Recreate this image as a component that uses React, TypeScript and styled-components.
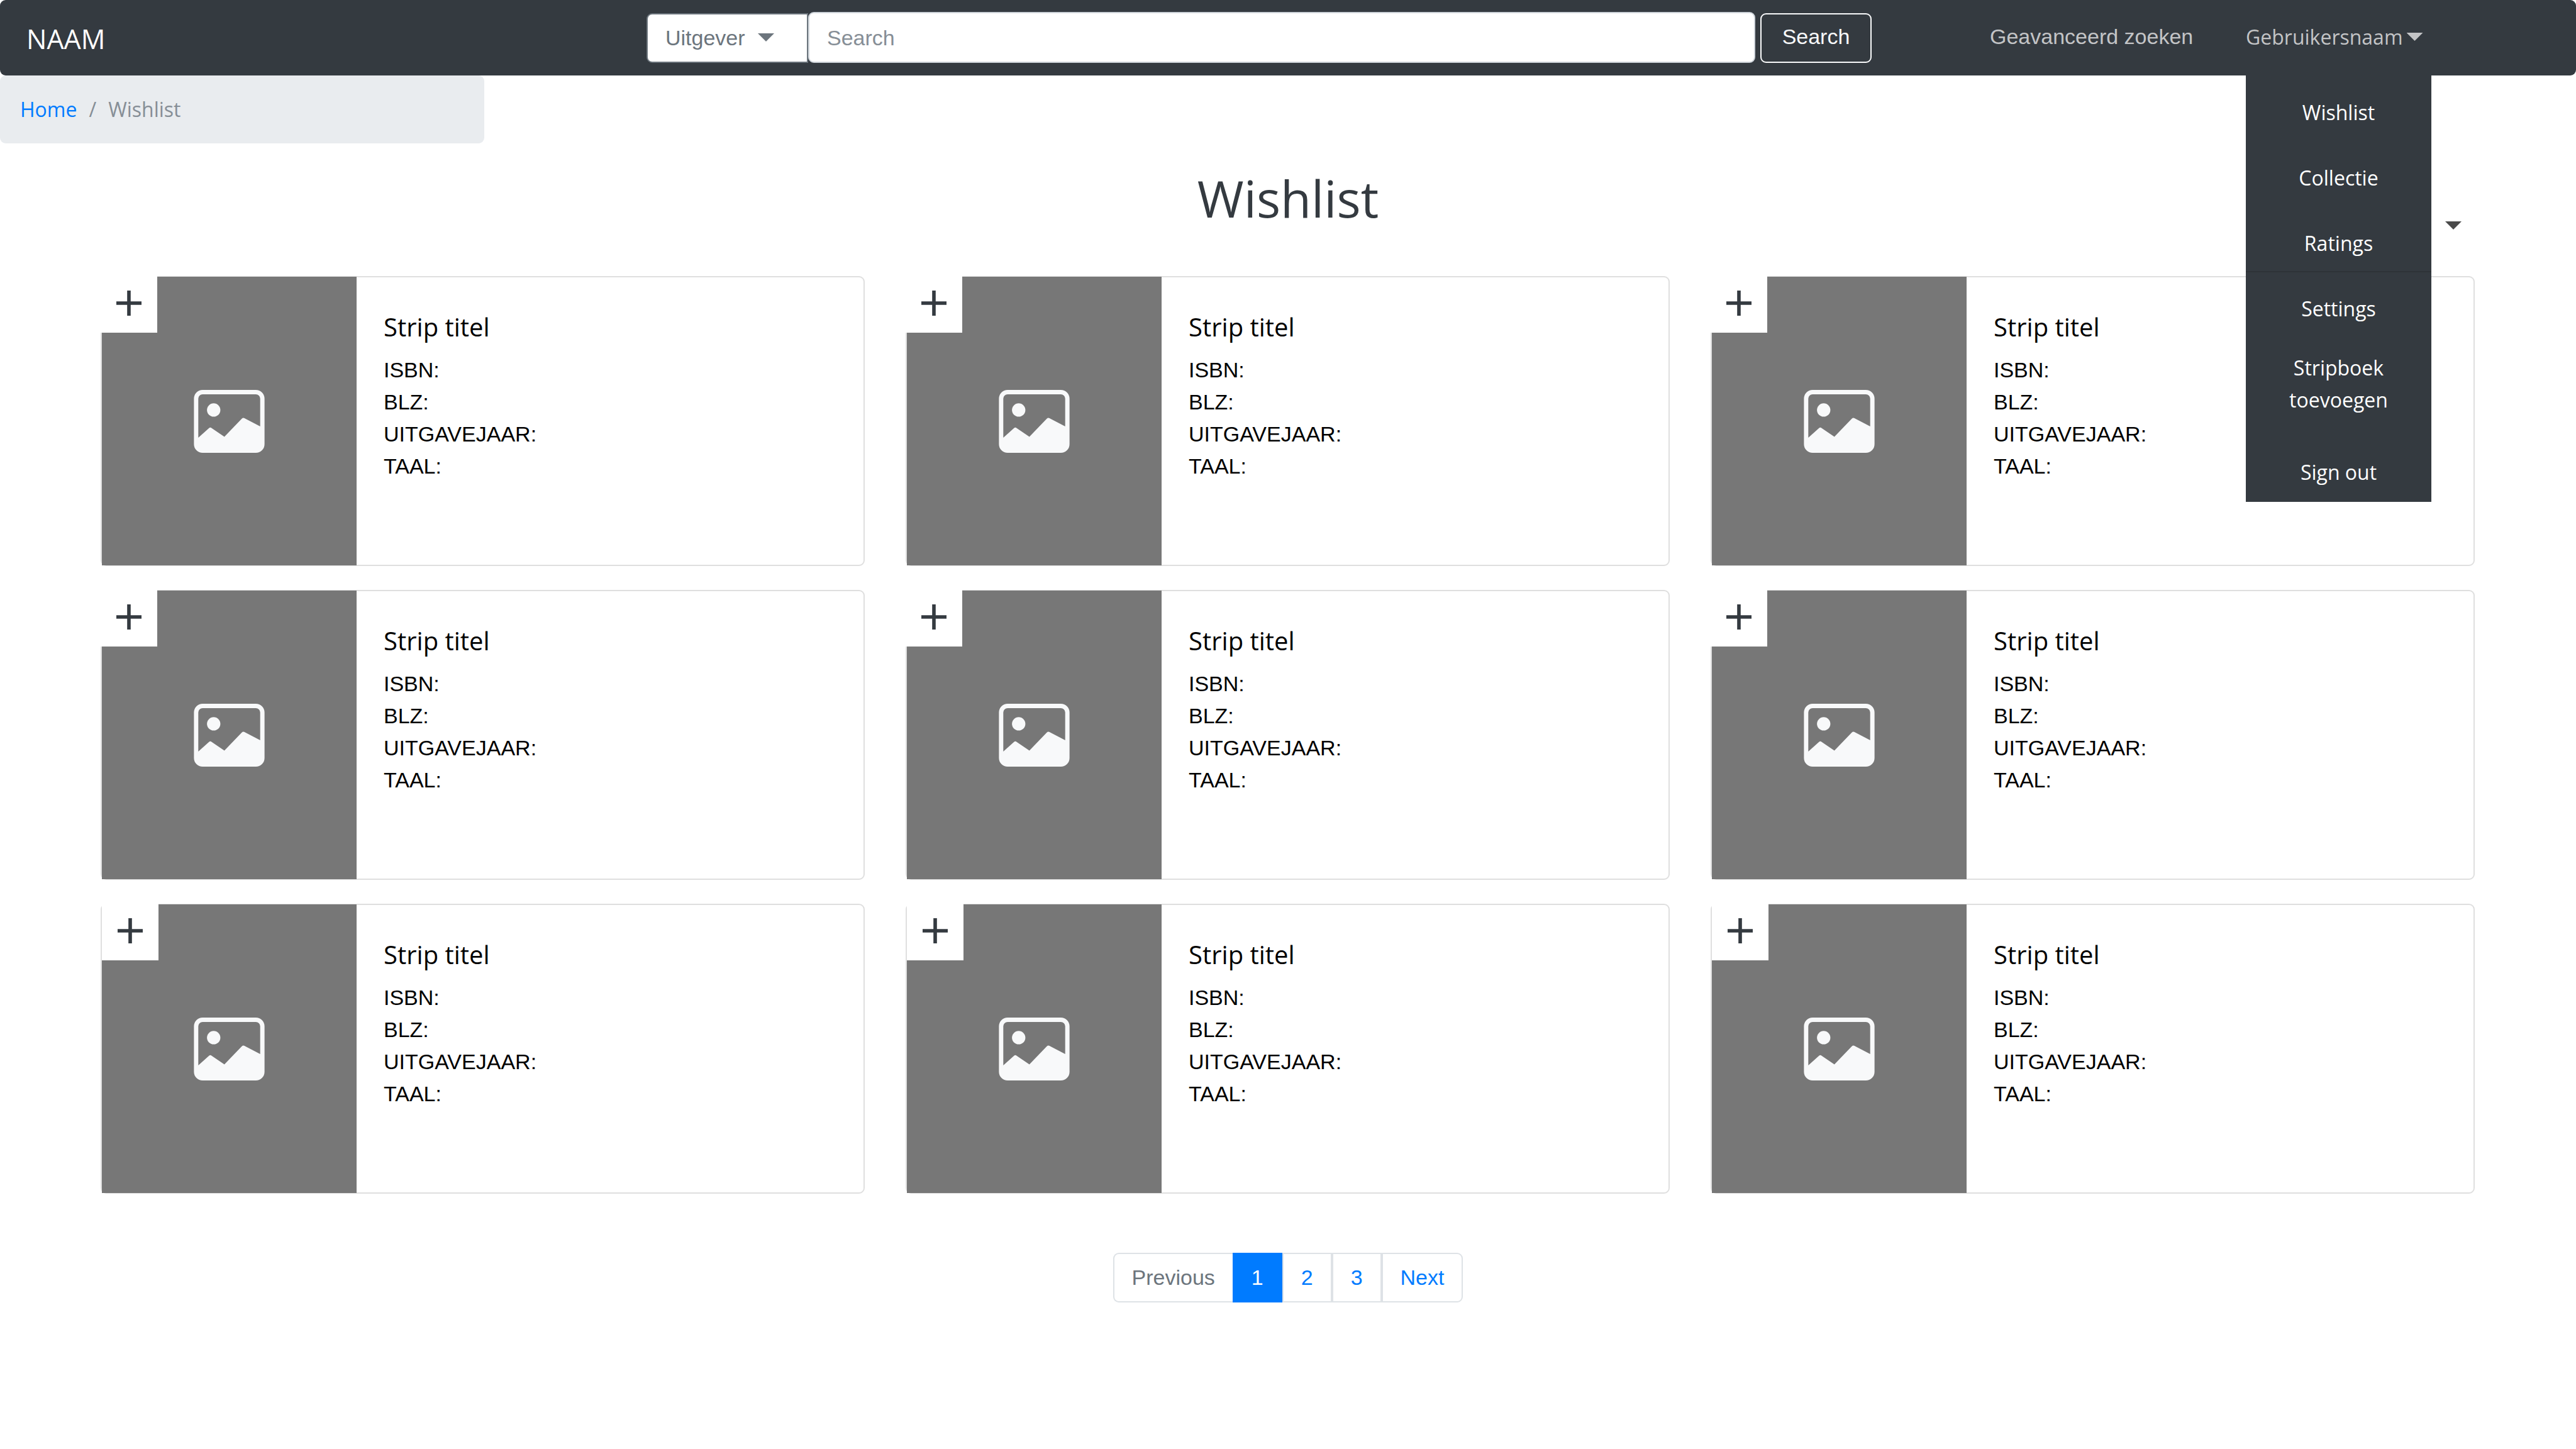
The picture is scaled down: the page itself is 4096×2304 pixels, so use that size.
import React from "react";
import styled, { createGlobalStyle, css } from "styled-components";

const ui = `"Open Sans", "Segoe UI", sans-serif`;
const sans = `"Liberation Sans", Arial, sans-serif`;
const dark = "#343a40";
const slate = "#6c757d";
const blue = "#007bff";

const GlobalStyle = createGlobalStyle`
  *, *::before, *::after { box-sizing: border-box; }
  body { margin: 0; background: #fff; color: #000; font-family: ${sans}; font-size: 34px; line-height: 51px; }
  button, input, select { font: inherit; margin: 0; }
  a { text-decoration: none; color: inherit; }
  ul, ol { list-style: none; margin: 0; padding: 0; }
  h1, h2, p { margin: 0; font-weight: 400; }
`;

const Caret = styled.span`
  display: block;
  flex: none;
  width: 26px;
  height: 13px;
  background: currentColor;
  clip-path: polygon(0 0, 100% 0, 50% 100%);
`;

const Navbar = styled.header`
  display: grid;
  grid-template-columns: 1028px 1fr 1120px;
  height: 120px;
  border-radius: 9px;
  background: ${dark};
`;

const Brand = styled.a`
  padding: 30px 42px 0;
  color: #fff;
  font-family: ${ui};
  font-size: 43px;
  line-height: 64px;
`;

const SearchForm = styled.form`
  display: flex;
  align-items: flex-end;
  height: 100px;
`;

const Picker = styled.div`
  position: relative;
  flex: none;
  width: 257px;
  color: ${slate};
`;

const PublisherSelect = styled.select`
  display: block;
  appearance: none;
  width: 100%;
  height: 79px;
  padding: 0 60px 0 28px;
  border: 2px solid ${slate};
  border-radius: 9px 0 0 9px;
  background: #fff;
  color: ${slate};
`;

const PickerCaret = styled(Caret)`
  position: absolute;
  right: 54px;
  top: 32px;
  pointer-events: none;
`;

const SearchInput = styled.input`
  flex: 1;
  min-width: 0;
  height: 81px;
  padding: 2px 28px 0;
  border: 2px solid #ced4da;
  border-radius: 9px;
  background: #fff;
  &::placeholder { color: #868e96; opacity: 1; }
`;

const SearchButton = styled.button`
  flex: none;
  width: 177px;
  height: 79px;
  margin-left: 8px;
  padding: 0 0 4px;
  border: 2px solid #f8f9fa;
  border-radius: 9px;
  background: transparent;
  color: #f8f9fa;
`;

const NavLinks = styled.nav`
  display: flex;
  align-items: flex-start;
  justify-content: space-between;
  padding: 33px 230px 0 188px;
  color: #c3c4c6;
`;

const NavLink = styled.a`
  white-space: nowrap;
`;

const Account = styled.div`
  position: relative;
  width: 295px;
  font-family: ${ui};
  font-size: 32px;
`;

const AccountButton = styled.button`
  display: flex;
  align-items: center;
  gap: 6px;
  padding: 0;
  border: 0;
  background: none;
  color: inherit;
  white-space: nowrap;
`;

const Menu = styled.ul`
  position: absolute;
  z-index: 2;
  top: 86px;
  left: 0;
  width: 100%;
  padding-top: 7px;
  background: ${dark};
  color: #fff;
  text-align: center;
`;

const itemSizes = {
  normal: css`height: 104px;`,
  tall: css`height: 160px; padding: 0 60px 24px;`,
  last: css`height: 96px;`,
};

const MenuItem = styled.li<{ $size: keyof typeof itemSizes; $divided?: boolean }>`
  position: relative;
  display: flex;
  align-items: center;
  justify-content: center;
  ${(p) => itemSizes[p.$size]}
  ${(p) => p.$divided && css`
    &::after {
      content: "";
      position: absolute;
      inset: auto 0 5px;
      height: 2px;
      background: #2e3338;
    }
  `}
`;

const Breadcrumb = styled.nav`
  width: 770px;
  height: 108px;
  padding: 28px 32px;
  border-radius: 9px;
  background: #e9ecef;
  color: #868e96;
  font-family: ${ui};
  font-size: 32px;
`;

const Crumbs = styled.ol`
  display: flex;
  gap: 19px;
  a { color: ${blue}; }
`;

const Heading = styled.div`
  display: grid;
  grid-template-columns: 1fr auto 1fr;
  height: 211px;
  padding: 0 182px;
`;

const Title = styled.h1`
  grid-column: 2;
  padding-top: 31px;
  color: ${dark};
  font-family: ${ui};
  font-size: 80px;
  line-height: 112px;
`;

const SortButton = styled.button`
  justify-self: end;
  align-self: start;
  margin-top: 112px;
  padding: 12px 0;
  border: 0;
  background: none;
  color: #4a4a4a;
`;

const Grid = styled.ul`
  display: grid;
  grid-template-columns: repeat(3, 1fr);
  gap: 38px 65px;
  padding: 0 161px 0 160px;
`;

const Card = styled.li`
  position: relative;
  display: flex;
  height: 461px;
  border: 2px solid #dfdfdf;
  border-radius: 9px;
`;

const Cover = styled.div`
  display: flex;
  align-items: center;
  justify-content: center;
  flex: none;
  width: 405px;
  margin: -1px 0;
  background: #777;
  svg { width: 113px; height: 100px; }
`;

const AddButton = styled.button<{ $inset: boolean }>`
  position: absolute;
  top: -2px;
  left: ${(p) => (p.$inset ? 0 : -2)}px;
  display: grid;
  place-items: center;
  width: 90px;
  height: 90px;
  padding: 0 0 4px;
  border: 0;
  background: #fff;
  svg { width: 40px; height: 40px; }
`;

const Details = styled.div`
  padding: 47px 43px;
`;

const CardTitle = styled.h2`
  margin-bottom: 11px;
  font-family: ${ui};
  font-size: 40px;
  line-height: 64px;
`;

const Pagination = styled.ul`
  display: flex;
  justify-content: center;
  margin-top: 94px;
`;

const PageLink = styled.a<{ $state?: "active" | "muted" }>`
  display: block;
  height: 79px;
  padding: 12px 28px;
  border: 2px solid #dee2e6;
  color: ${blue};
  li:first-child > & { border-radius: 9px 0 0 9px; border-right: 0; }
  li:last-child > & { border-radius: 0 9px 9px 0; }
  ${(p) => p.$state === "muted" && css`color: ${slate};`}
  ${(p) => p.$state === "active" && css`
    border-color: ${blue};
    background: ${blue};
    color: #fff;
  `}
`;

const PlusIcon = () => (
  <svg viewBox="0 0 40 40" aria-hidden="true">
    <path d="M20 0v40M0 20h40" stroke={dark} strokeWidth="5.6" />
  </svg>
);

const ImageIcon = () => (
  <svg viewBox="0 0 211 188" fill="#f8f9fa" aria-hidden="true">
    <path
      fillRule="evenodd"
      d="M26 0H185A26 26 0 0 1 211 26V162A26 26 0 0 1 185 188H26A26 26 0 0 1 0 162V26A26 26 0 0 1 26 0ZM26 13A13 13 0 0 0 13 26V143L45 114Q49 111 53 114L91 140L143 86Q147 82 152 85L198 109V26A13 13 0 0 0 185 13Z"
    />
    <circle cx="59" cy="60" r="20" />
  </svg>
);

const menu: { label: string; size: keyof typeof itemSizes; divided?: boolean }[] = [
  { label: "Wishlist", size: "normal" },
  { label: "Collectie", size: "normal" },
  { label: "Ratings", size: "normal", divided: true },
  { label: "Settings", size: "normal" },
  { label: "Stripboek toevoegen", size: "tall" },
  { label: "Sign out", size: "last" },
];

const fields = ["ISBN:", "BLZ:", "UITGAVEJAAR:", "TAAL:"];
const strips = Array.from({ length: 9 }, (_, id) => ({ id, title: "Strip titel" }));

export default function App() {
  return (
    <>
      <GlobalStyle />
      <Navbar>
        <Brand href="#">NAAM</Brand>
        <SearchForm role="search">
          <Picker>
            <PublisherSelect aria-label="Uitgever">
              <option>Uitgever</option>
            </PublisherSelect>
            <PickerCaret />
          </Picker>
          <SearchInput type="text" placeholder="Search" aria-label="Search" />
          <SearchButton type="button">Search</SearchButton>
        </SearchForm>
        <NavLinks>
          <NavLink href="#">Geavanceerd zoeken</NavLink>
          <Account>
            <AccountButton type="button" aria-expanded="true">
              Gebruikersnaam
              <Caret />
            </AccountButton>
            <Menu>
              {menu.map((m) => (
                <MenuItem key={m.label} $size={m.size} $divided={m.divided}>
                  <a href="#">{m.label}</a>
                </MenuItem>
              ))}
            </Menu>
          </Account>
        </NavLinks>
      </Navbar>
      <Breadcrumb aria-label="Breadcrumb">
        <Crumbs>
          <li><a href="#">Home</a></li>
          <li aria-hidden="true">/</li>
          <li aria-current="page">Wishlist</li>
        </Crumbs>
      </Breadcrumb>
      <main>
        <Heading>
          <Title>Wishlist</Title>
          <SortButton type="button" aria-label="Sorteren">
            <Caret />
          </SortButton>
        </Heading>
        <Grid>
          {strips.map((strip) => (
            <Card key={strip.id}>
              <Cover><ImageIcon /></Cover>
              <AddButton type="button" aria-label="Toevoegen" $inset={strip.id >= 6}>
                <PlusIcon />
              </AddButton>
              <Details>
                <CardTitle>{strip.title}</CardTitle>
                {fields.map((f) => <p key={f}>{f}</p>)}
              </Details>
            </Card>
          ))}
        </Grid>
        <nav aria-label="Pagination">
          <Pagination>
            <li><PageLink href="#" $state="muted">Previous</PageLink></li>
            <li><PageLink href="#" $state="active" aria-current="page">1</PageLink></li>
            <li><PageLink href="#">2</PageLink></li>
            <li><PageLink href="#">3</PageLink></li>
            <li><PageLink href="#">Next</PageLink></li>
          </Pagination>
        </nav>
      </main>
    </>
  );
}
